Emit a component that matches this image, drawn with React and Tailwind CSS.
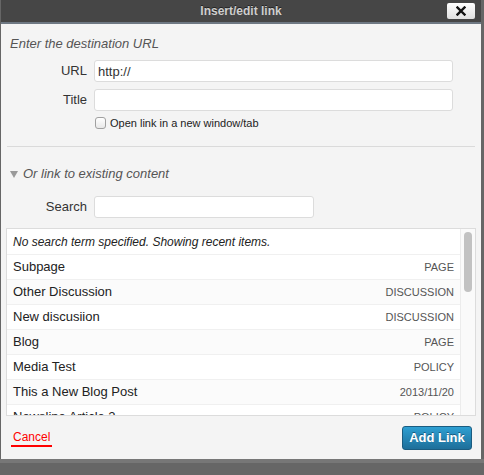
import React from "react";

const rows = [
  ["Subpage", "PAGE"],
  ["Other Discussion", "DISCUSSION"],
  ["New discusiion", "DISCUSSION"],
  ["Blog", "PAGE"],
  ["Media Test", "POLICY"],
  ["This a New Blog Post", "2013/11/20"],
  ["Newsline Article 2", "POLICY"],
];

export default function App() {
  return (
    <div className="w-[484px] h-[475px] bg-[#666666] overflow-hidden leading-[16px]" style={{ fontFamily: '"Liberation Sans", Arial, sans-serif' }}>
      <div className="h-[459px] ml-[1px] mr-[3px] bg-[#f4f4f4] flex flex-col">
        {/* title bar */}
        <div className="h-[22px] shrink-0 bg-[#464646] relative flex items-center justify-center">
          <span className="text-[12px] font-bold text-[#cfcfcf] [text-shadow:0_-1px_0_#222]">Insert/edit link</span>
          <div className="absolute right-[6px] top-[3px] w-[28px] h-[16px] bg-gradient-to-b from-white to-[#e0e0e0] rounded-[2px] flex items-center justify-center">
            <svg width="10" height="10" viewBox="0 0 10 10">
              <path d="M1.5 1.5 L8.5 8.5 M8.5 1.5 L1.5 8.5" stroke="#111" strokeWidth="2.4" strokeLinecap="square" />
            </svg>
          </div>
        </div>
        <div className="h-[2px] shrink-0 bg-[#6e7883]" />
        {/* body */}
        <div className="px-[9px] pt-[12px]">
          <div className="h-[16px] text-[13px] italic text-[#555]">Enter the destination URL</div>
          <div className="mt-[8px] flex items-center">
            <span className="w-[77px] text-right text-[13px] text-[#333]">URL</span>
            <input readOnly value="http://" className="ml-[7px] w-[359px] h-[22px] bg-white border border-[#dcdcdc] rounded-[3px] px-[3px] text-[13px] text-[#333] outline-none" />
          </div>
          <div className="mt-[7px] flex items-center">
            <span className="w-[77px] text-right text-[13px] text-[#333]">Title</span>
            <input readOnly value="" className="ml-[7px] w-[359px] h-[22px] bg-white border border-[#dcdcdc] rounded-[3px] px-[3px] text-[13px] outline-none" />
          </div>
          <div className="mt-[5px] h-[14px] ml-[85px] flex items-center">
            <span className="w-[11px] h-[12px] rounded-[3px] border border-[#a0a0a0] bg-gradient-to-b from-white to-[#e8e8e8]" />
            <span className="ml-[4px] text-[11px] text-[#222]">Open link in a new window/tab</span>
          </div>
        </div>
        <div className="mx-[6px] mt-[16px] h-px shrink-0 bg-[#dadada]" />
        <div className="px-[9px] mt-[19px] h-[16px] flex items-center">
          <svg width="8" height="7" viewBox="0 0 8 7" className="mt-[1px]">
            <path d="M0 0 L8 0 L4 7 Z" fill="#9a9a9a" />
          </svg>
          <span className="ml-[5px] text-[13px] italic text-[#555]">Or link to existing content</span>
        </div>
        <div className="px-[9px] mt-[14px] flex items-center">
          <span className="w-[77px] text-right text-[13px] text-[#333]">Search</span>
          <input readOnly value="" className="ml-[7px] w-[220px] h-[22px] bg-white border border-[#dcdcdc] rounded-[3px] px-[3px] text-[13px] outline-none" />
        </div>
        {/* results */}
        <div className="mx-[5px] mt-[10px] h-[188px] shrink-0 border border-[#dcdcdc] bg-white flex overflow-hidden">
          <div className="flex-1 overflow-hidden pt-px">
            <div className="h-[25px] px-[6px] flex items-center border-b border-[#f0f0f0] text-[12px] italic text-[#222]">
              No search term specified. Showing recent items.
            </div>
            {rows.map(([t, k], i) => (
              <div key={t} className={"h-[25px] px-[6px] flex items-center justify-between border-b border-[#f0f0f0] " + (i % 2 === 0 ? "bg-white" : "bg-[#fbfbfb]")}>
                <span className="text-[13px] text-[#222]">{t}</span>
                <span className="text-[11px] text-[#555]">{k}</span>
              </div>
            ))}
          </div>
          <div className="w-[15px] border-l border-[#ececec] bg-[#fafafa] pt-[3px] flex justify-center">
            <div className="w-[8px] h-[60px] rounded-[4px] bg-[#c2c2c2]" />
          </div>
        </div>
        {/* footer */}
        <div className="flex-1 pl-[10px] pr-[9px] flex items-center justify-between">
          <span className="text-[12px] text-[#ff0000] border-b-2 border-[#ff0000] leading-[15px] px-[2px] mt-[2px]">Cancel</span>
          <button className="w-[70px] h-[24px] rounded-[3px] bg-gradient-to-b from-[#2e9fd2] to-[#1e6f9a] border border-[#1b5c80] text-white text-[13px] font-bold [text-shadow:0_-1px_0_#1a5a80]">
            Add Link
          </button>
        </div>
      </div>
      <div className="h-[4px] bg-[#777]" />
    </div>
  );
}
